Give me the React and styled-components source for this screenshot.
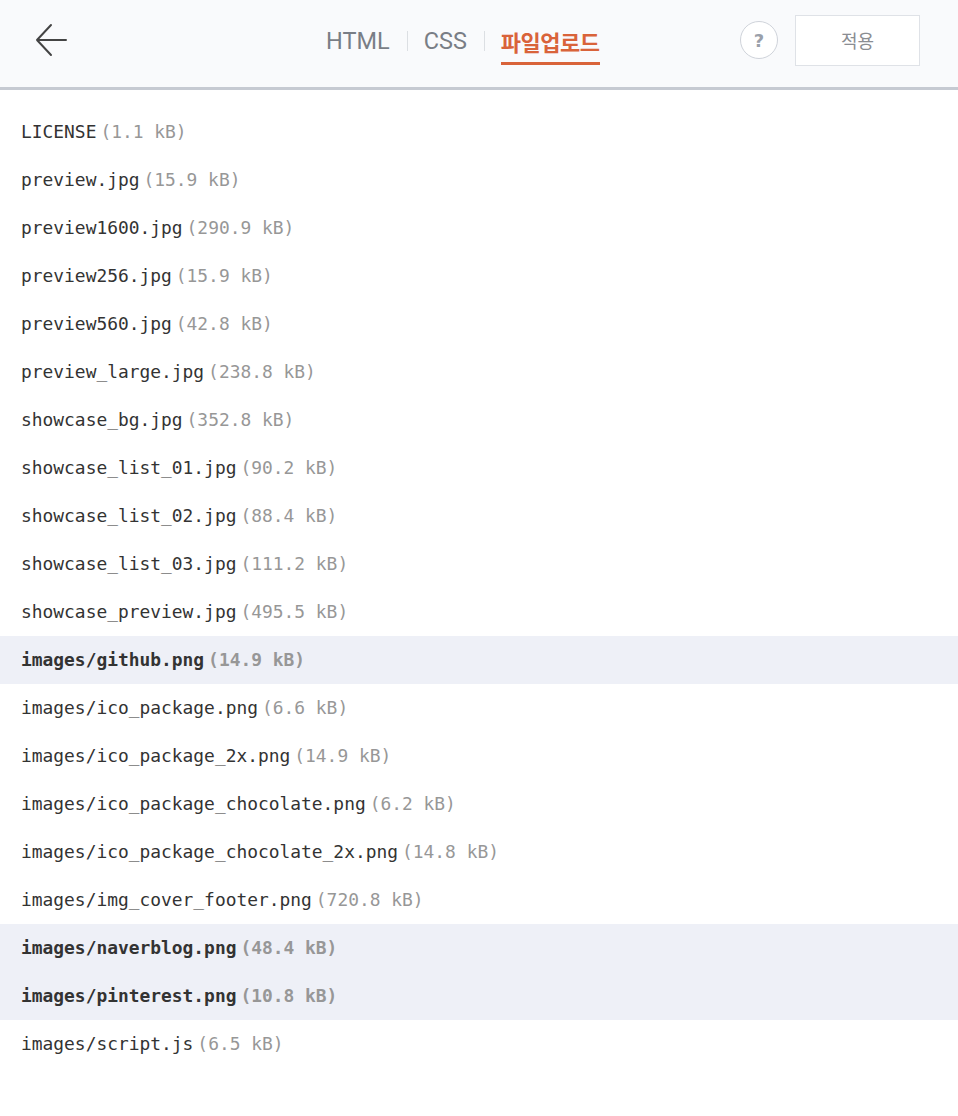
import React from "react";
import styled, { createGlobalStyle } from "styled-components";

const GlobalStyle = createGlobalStyle`
  html, body {
    margin: 0;
    padding: 0;
    background: #ffffff;
  }
  body {
    font-family: "Noto Sans CJK KR", "Noto Sans", sans-serif;
  }
`;

const Page = styled.div`
  width: 958px;
  min-height: 1116px;
  background: #ffffff;
`;

const Header = styled.header`
  height: 87px;
  background: #f9fafc;
  border-bottom: 3px solid #c6cad2;
  display: flex;
  align-items: center;
  padding: 0 38px 0 34px;
  box-sizing: content-box;
`;

const BackButton = styled.button`
  width: 36px;
  height: 36px;
  padding: 0;
  border: 0;
  background: none;
  display: flex;
  align-items: center;
  justify-content: center;
  cursor: pointer;
  margin-top: -7px;
`;

const Tabs = styled.nav`
  display: flex;
  align-items: center;
  margin-left: 256px;
  margin-right: auto;
  height: 100%;
`;

const Tab = styled.a`
  font-family: ${(p) =>
    p.active ? `"Noto Sans CJK KR", sans-serif` : `Roboto, "Noto Sans", sans-serif`};
  font-size: ${(p) => (p.active ? "22px" : "23.5px")};
  line-height: 30px;
  color: ${(p) => (p.active ? "#d9633a" : "#797e86")};
  font-weight: ${(p) => (p.active ? 700 : 400)};
  text-decoration: none;
  position: relative;
  margin-top: -5px;
  letter-spacing: ${(p) => (p.active ? "-0.5px" : "0")};

  &::after {
    content: "";
    display: ${(p) => (p.active ? "block" : "none")};
    position: absolute;
    left: 0;
    right: 0;
    bottom: -9px;
    height: 3px;
    background: #d9633a;
  }
`;

const Sep = styled.span`
  width: 1px;
  height: 20px;
  background: #dcdfe3;
  margin: -5px 16px 0 17px;
`;

const Actions = styled.div`
  display: flex;
  align-items: center;
  gap: 17px;
  margin-top: -7px;
`;

const Help = styled.button`
  width: 38px;
  height: 38px;
  border-radius: 50%;
  border: 1px solid #cfd3da;
  background: #ffffff;
  color: #9aa0aa;
  font-family: "DejaVu Sans", sans-serif;
  font-weight: 700;
  font-size: 18px;
  padding: 0;
  display: flex;
  align-items: center;
  justify-content: center;
`;

const Apply = styled.button`
  width: 125px;
  height: 51px;
  background: #ffffff;
  border: 1px solid #dfe2e7;
  color: #8a8d92;
  font-family: "Noto Sans CJK KR", sans-serif;
  font-size: 18px;
  padding: 0;
`;

const List = styled.ul`
  list-style: none;
  margin: 0;
  padding: 18px 0 0;
`;

const Row = styled.li`
  box-sizing: border-box;
  height: 48px;
  display: flex;
  align-items: center;
  padding: 0 0 2px 21px;
  background: ${(p) => (p.selected ? "#eef0f7" : "transparent")};
  font-family: "DejaVu Sans Mono", monospace;
  font-size: 17.9px;
  font-weight: ${(p) => (p.selected ? 700 : 400)};
  color: #333333;
`;

const Size = styled.span`
  color: #979797;
  margin-left: 4px;
`;

const files = [
  ["LICENSE", "1.1 kB"],
  ["preview.jpg", "15.9 kB"],
  ["preview1600.jpg", "290.9 kB"],
  ["preview256.jpg", "15.9 kB"],
  ["preview560.jpg", "42.8 kB"],
  ["preview_large.jpg", "238.8 kB"],
  ["showcase_bg.jpg", "352.8 kB"],
  ["showcase_list_01.jpg", "90.2 kB"],
  ["showcase_list_02.jpg", "88.4 kB"],
  ["showcase_list_03.jpg", "111.2 kB"],
  ["showcase_preview.jpg", "495.5 kB"],
  ["images/github.png", "14.9 kB", true],
  ["images/ico_package.png", "6.6 kB"],
  ["images/ico_package_2x.png", "14.9 kB"],
  ["images/ico_package_chocolate.png", "6.2 kB"],
  ["images/ico_package_chocolate_2x.png", "14.8 kB"],
  ["images/img_cover_footer.png", "720.8 kB"],
  ["images/naverblog.png", "48.4 kB", true],
  ["images/pinterest.png", "10.8 kB", true],
  ["images/script.js", "6.5 kB"],
];

const BackIcon = () => (
  <svg width="36" height="36" viewBox="0 0 36 36" fill="none">
    <path
      d="M32 18H3M17 3L3 18L17 33"
      stroke="#444444"
      strokeWidth="2"
      strokeLinecap="round"
      strokeLinejoin="round"
    />
  </svg>
);

export default function App() {
  return (
    <Page>
      <GlobalStyle />
      <Header>
        <BackButton aria-label="뒤로">
          <BackIcon />
        </BackButton>
        <Tabs>
          <Tab href="#">HTML</Tab>
          <Sep />
          <Tab href="#">CSS</Tab>
          <Sep />
          <Tab href="#" active>
            파일업로드
          </Tab>
        </Tabs>
        <Actions>
          <Help>?</Help>
          <Apply>적용</Apply>
        </Actions>
      </Header>
      <List>
        {files.map(([name, size, selected]) => (
          <Row key={name} selected={selected}>
            {name}
            <Size>({size})</Size>
          </Row>
        ))}
      </List>
    </Page>
  );
}
